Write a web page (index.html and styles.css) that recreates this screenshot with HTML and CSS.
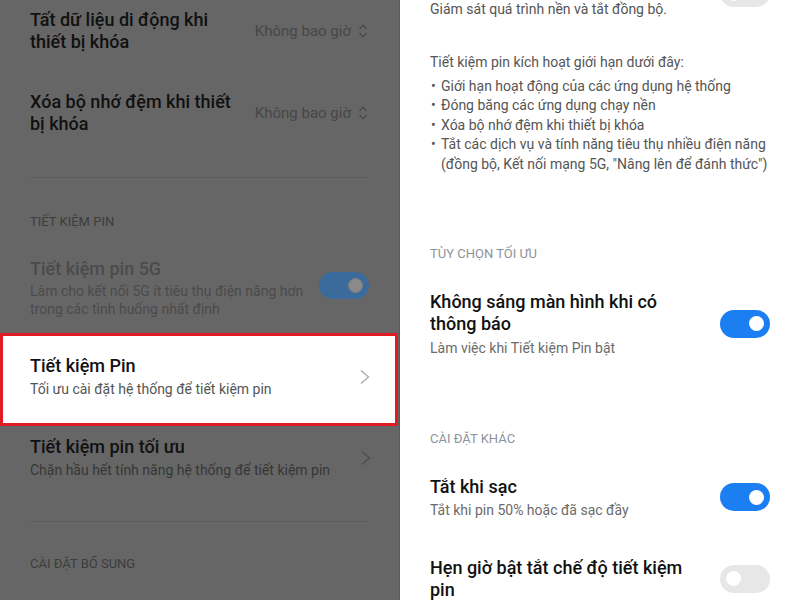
FILE: index.html
```html
<!DOCTYPE html>
<html lang="vi">
<head>
<meta charset="utf-8">
<title>Tiết kiệm Pin</title>
<link rel="stylesheet" href="styles.css">
</head>
<body>
<div class="screen">
  <section class="panel panel-left">
    <div class="list shift-up">
      <div class="row">
        <div class="text"><div class="title">Tất dữ liệu di động khi thiết bị khóa</div></div>
        <div class="value">Không bao giờ
          <svg class="updown" width="10" height="16" viewBox="0 0 10 16"><path d="M1.5 6 L5 2.2 L8.5 6 M1.5 10 L5 13.8 L8.5 10" fill="none" stroke="currentColor" stroke-width="1.2"/></svg>
        </div>
      </div>
      <div class="row">
        <div class="text"><div class="title">Xóa bộ nhớ đệm khi thiết bị khóa</div></div>
        <div class="value">Không bao giờ
          <svg class="updown" width="10" height="16" viewBox="0 0 10 16"><path d="M1.5 6 L5 2.2 L8.5 6 M1.5 10 L5 13.8 L8.5 10" fill="none" stroke="currentColor" stroke-width="1.2"/></svg>
        </div>
      </div>
      <div class="divider"></div>
      <div class="header">TIẾT KIỆM PIN</div>
      <div class="row row-narrow-gap">
        <div class="text">
          <div class="title disabled">Tiết kiệm pin 5G</div>
          <div class="sub disabled">Làm cho kết nối 5G ít tiêu thụ điện năng hơn trong các tình huống nhất định</div>
        </div>
        <span class="toggle on dim"><span class="knob"></span></span>
      </div>
      <div class="highlight">
        <div class="row">
          <div class="text">
            <div class="title">Tiết kiệm Pin</div>
            <div class="sub">Tối ưu cài đặt hệ thống để tiết kiệm pin</div>
          </div>
          <svg class="chev" width="10" height="16" viewBox="0 0 10 16"><path d="M1 1.5 L8.5 8 L1 14.5" fill="none" stroke="currentColor" stroke-width="1.3"/></svg>
        </div>
      </div>
      <div class="row">
        <div class="text">
          <div class="title">Tiết kiệm pin tối ưu</div>
          <div class="sub">Chặn hầu hết tính năng hệ thống để tiết kiệm pin</div>
        </div>
        <svg class="chev" width="10" height="16" viewBox="0 0 10 16"><path d="M1 1.5 L8.5 8 L1 14.5" fill="none" stroke="currentColor" stroke-width="1.3"/></svg>
      </div>
      <div class="divider"></div>
      <div class="header">CÀI ĐẶT BỔ SUNG</div>
    </div>
  </section>

  <section class="panel panel-right">
    <div class="top-row">
      <div class="info">Giám sát quá trình nền và tắt đồng bộ.</div>
      <span class="toggle off top-toggle"><span class="knob"></span></span>
    </div>
    <p class="info para">Tiết kiệm pin kích hoạt giới hạn dưới đây:</p>
    <ul class="bullets">
      <li><span class="dot">•</span><span>Giới hạn hoạt động của các ứng dụng hệ thống</span></li>
      <li><span class="dot">•</span><span>Đóng băng các ứng dụng chạy nền</span></li>
      <li><span class="dot">•</span><span>Xóa bộ nhớ đệm khi thiết bị khóa</span></li>
      <li><span class="dot">•</span><span>Tắt các dịch vụ và tính năng tiêu thụ nhiều điện năng (đồng bộ, Kết nối mạng 5G, "Nâng lên để đánh thức")</span></li>
    </ul>
    <div class="divider"></div>
    <div class="header">TÙY CHỌN TỐI ƯU</div>
    <div class="row">
      <div class="text">
        <div class="title">Không sáng màn hình khi có thông báo</div>
        <div class="sub sub-gap">Làm việc khi Tiết kiệm Pin bật</div>
      </div>
      <span class="toggle on"><span class="knob"></span></span>
    </div>
    <div class="divider"></div>
    <div class="header">CÀI ĐẶT KHÁC</div>
    <div class="row">
      <div class="text">
        <div class="title">Tắt khi sạc</div>
        <div class="sub">Tắt khi pin 50% hoặc đã sạc đầy</div>
      </div>
      <span class="toggle on"><span class="knob"></span></span>
    </div>
    <div class="row">
      <div class="text">
        <div class="title">Hẹn giờ bật tắt chế độ tiết kiệm pin</div>
      </div>
      <span class="toggle off"><span class="knob"></span></span>
    </div>
  </section>
</div>
</body>
</html>
```

FILE: styles.css
```css
* { box-sizing: border-box; }
html, body { margin: 0; padding: 0; }
body {
  width: 800px;
  height: 600px;
  overflow: hidden;
  font-family: Roboto, "Noto Sans", "Liberation Sans", sans-serif;
  background: #fff;
}
.screen {
  display: flex;
  width: 800px;
  height: 600px;
  overflow: hidden;
}
.panel {
  width: 400px;
  height: 600px;
  overflow: hidden;
  display: flex;
  flex-direction: column;
}
.panel-left {
  background: #666666;
  border-right: 1px solid #5b5b5b;
  color: #111;
}
.panel-right {
  background: #fff;
  padding: 0 30px;
  color: #111;
}
.list {
  display: flex;
  flex-direction: column;
}
.shift-up { margin-top: -10px; }

.row {
  display: flex;
  align-items: center;
  gap: 16px;
  padding: 19px 30px;
}
.row-narrow-gap { gap: 6px; }
.panel-right .row { padding: 19px 0; }
.text { flex: 1; min-width: 0; }
.title {
  font-size: 18px;
  line-height: 22px;
  font-weight: 500;
  color: #111;
}
.sub {
  font-size: 14px;
  line-height: 18px;
  margin-top: 3px;
  color: #6b6b6b;
}
.sub-gap { margin-top: 4px; }
.panel-left .sub { color: #363636; }
.panel-left .title.disabled,
.panel-left .sub.disabled { color: #4b4b4b; }
.panel-left .sub.disabled { margin-top: 2px; }

.value {
  display: flex;
  align-items: center;
  gap: 7px;
  font-size: 15px;
  color: #474747;
  white-space: nowrap;
  margin-right: 1px;
}
.updown { color: #4a4a4a; }
.chev { color: #4d4d4d; flex: none; margin-right: -2px; }

.divider {
  height: 1px;
  background: #eaeaea;
  margin-top: 22px;
}
.panel-left .divider {
  background: #5c5c5c;
  margin: 23px 30px 0;
}
.header {
  font-size: 13px;
  line-height: 18px;
  color: #8e939b;
  margin: 32px 0 9px;
}
.panel-left .header {
  color: #3d3d3d;
  padding: 0 30px;
  margin: 35px 0 8px;
}
.panel-left .divider + .header:last-child { margin-top: 33px; }

.highlight {
  background: #fff;
  border: 3px solid #e01b24;
  margin: -4px 1px -9px 0;
}
.highlight .row { padding: 19px 27px 25px; }
.highlight .sub { color: #555; }
.highlight .chev { color: #a9a9a9; }

.toggle {
  flex: none;
  position: relative;
  width: 50px;
  height: 28px;
  border-radius: 14px;
  display: block;
}
.toggle .knob {
  position: absolute;
  top: 6.5px;
  width: 15px;
  height: 15px;
  border-radius: 50%;
  background: #fff;
}
.toggle.on { background: #1b7ff2; }
.toggle.on .knob { right: 6px; }
.toggle.off { background: #e7e7e7; }
.toggle.off .knob { left: 6px; }
.toggle.dim { background: #3b6b9c; height: 27px; margin-bottom: 6px; }
.toggle.dim .knob { background: #8a8a8a; border: 1.5px solid #7c7c7c; top: 6px; }

.top-row {
  display: flex;
  justify-content: space-between;
  align-items: flex-start;
}
.top-toggle { margin-top: -21px; }
.info {
  font-size: 14px;
  line-height: 18px;
  color: #555;
}
.para {
  margin: 35px 0 4px;
  line-height: 19.6px;
}
.bullets {
  list-style: none;
  margin: 0;
  padding: 0;
  font-size: 14px;
  line-height: 19.6px;
  color: #555;
}
.bullets li { display: flex; }
.bullets .dot { flex: none; width: 11px; padding-left: 1px; }
.panel-right .divider { margin-top: 38px; }
.panel-right .row + .divider { margin-top: 22px; }
```
